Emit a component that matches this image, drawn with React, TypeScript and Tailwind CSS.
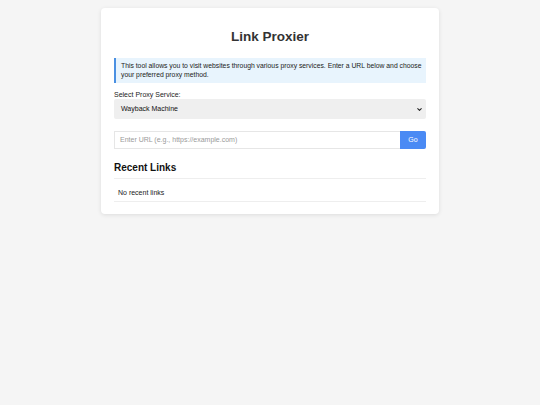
import { ChevronDown } from "lucide-react";

export default function App() {
  return (
    <div className="min-h-[405px] bg-[#f5f5f5] pt-[8px] font-['Liberation_Sans',Arial,sans-serif]">
      <div className="mx-auto w-[338px] rounded-[4px] bg-white px-[13px] pt-[13px] pb-[12px] shadow-[0_1px_4px_rgba(0,0,0,0.1)]">
        <h1 className="mt-[8px] mb-[13px] text-center text-[13.5px] leading-[16px] font-bold text-[#333]">
          Link Proxier
        </h1>

        {/* Info */}
        <div className="border-l-[2px] border-[#4a90e2] bg-[#e8f4fd] py-[4px] pr-[4px] pl-[5px] text-[6.8px] leading-[8.5px] text-[#222]">
          This tool allows you to visit websites through various proxy services. Enter a URL below and
          choose your preferred proxy method.
        </div>

        <div className="mt-[8px] text-[7px] leading-[8px] text-[#222]">Select Proxy Service:</div>
        <div className="flex h-[20px] items-center justify-between rounded-[2px] bg-[#efefef] pr-[3px] pl-[7px] text-[7px] text-[#111]">
          <span>Wayback Machine</span>
          <ChevronDown className="h-[7px] w-[7px] text-[#222]" strokeWidth={3.5} />
        </div>

        <div className="mt-[12px] flex h-[18px]">
          <div className="flex flex-1 items-center border border-r-0 border-[#e6e6e6] pl-[5px] text-[7px] text-[#9a9a9a]">
            Enter URL (e.g., https://example.com)
          </div>
          <button className="w-[26px] rounded-r-[2px] bg-[#4a8af4] text-[7px] text-white">Go</button>
        </div>

        <h2 className="mt-[12px] border-b border-[#eeeeee] pb-[3px] text-[10px] leading-[14px] font-bold text-[#111]">
          Recent Links
        </h2>
        <div className="border-b border-[#eeeeee] pt-[10px] pb-[4px] pl-[4px] text-[7px] leading-[8px] text-[#222]">
          No recent links
        </div>
      </div>
    </div>
  );
}
